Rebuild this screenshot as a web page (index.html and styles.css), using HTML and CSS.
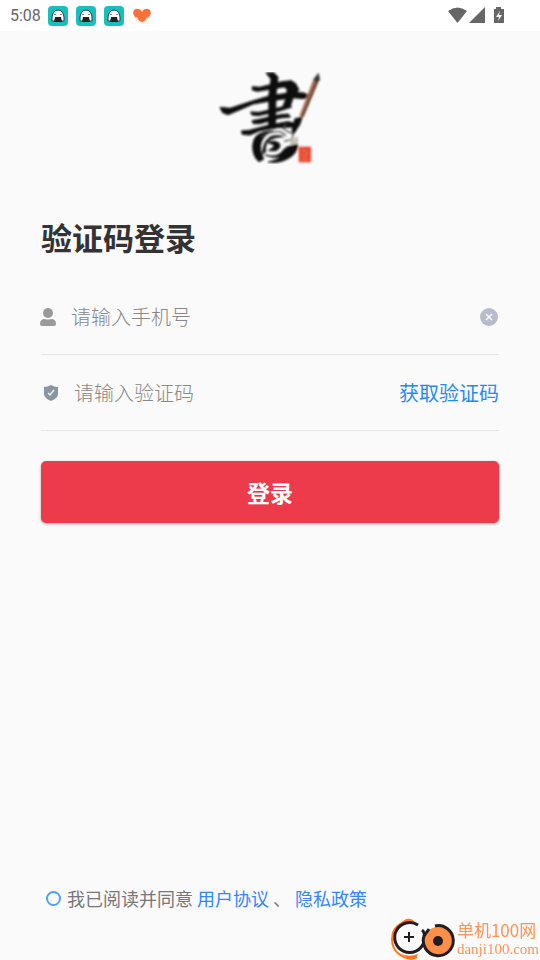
FILE: index.html
```
<!DOCTYPE html>
<html lang="zh-CN">
<head>
    <meta charset="UTF-8">
    <meta name="viewport" content="width=device-width, initial-scale=1.0">
    <link rel="stylesheet" href="styles.css">
    <title>验证码登录</title>
</head>
<body>

<svg width="0" height="0" class="defs">
    <symbol id="ghost" viewBox="0 0 20 20">
        <rect width="20" height="20" rx="4" fill="#17c0bf"/>
        <path d="M4 15V11Q5 4 10 4Q15 4 16 11V15Z" fill="#fff" stroke="#1b4446"/>
        <path d="M6 16L7 11H13L14 16Z" fill="#222"/>
        <path d="M7 8V9M13 8V9" stroke="#222"/>
    </symbol>
</svg>

<header class="status-bar">
    <span class="time">5:08</span>
    <svg class="app-icon"><use href="#ghost"/></svg>
    <svg class="app-icon"><use href="#ghost"/></svg>
    <svg class="app-icon"><use href="#ghost"/></svg>
    <svg class="app-icon" viewBox="0 0 20 20">
        <circle cx="10" cy="10" r="8" fill="#fdf0df"/>
        <path d="M10 6C12 2 17 2 18.500 5C20 9 16 11 14 14C12 15 11 16 10 16C9 16 8 15 6 14C4 11 0 9 1.500 5C3 2 8 2 10 6Z" fill="#f9703f"/>
        <path d="M4.500 11L6 14L8 16M15.500 11L14 14L12 16" stroke="#fdf0df" fill="none"/>
    </svg>
    <svg class="system" viewBox="0 0 58 20" fill="#666">
        <path d="M0 5Q9.500 -2 19 5L9.500 17Z"/>
        <path d="M37 1V17H21Z"/>
        <path d="M48 1H53V3H56V17H46V3H48Z"/>
        <path d="M52 5L48 11H51L50 15L54 9H51Z" fill="#fff"/>
    </svg>
</header>

<main class="page">
    <svg class="logo" viewBox="24 28 312 276" role="img" aria-label="書">
        <defs>
            <filter id="soft" x="-10%" y="-10%" width="120%" height="120%"><feGaussianBlur stdDeviation="3"/></filter>
        </defs>
        <g filter="url(#soft)">
            <g fill="#0b0b0b" stroke="#0b0b0b" stroke-width="3" stroke-linejoin="round">
                <path d="M168 31L191 30L204 43L198 94L196 196L176 198L177 93L183 49Z"/>
                <path d="M127 72L150 74L216 57L244 54L258 65L266 81L251 101L241 130L218 133L228 108L235 77L221 73L142 86L127 82Z"/>
                <path d="M222 62L254 60L266 81L248 103L222 108L232 84Z"/>
                <path d="M30 134L60 137L130 114L181 99L250 89L281 91L301 99L281 108L247 105L181 115L129 124L90 141L54 156L38 150Z"/>
                <path d="M122 148L148 149L237 128L245 133L211 144L145 159L126 157Z"/>
                <path d="M126 174L148 170L210 156L235 154L241 163L210 166L149 183L130 183Z"/>
                <path d="M94 205L118 203L178 187L234 177L260 183L250 193L202 195L150 204L119 217L97 215Z"/>
                <path d="M139 220Q159 204 190 205Q166 213 156 232Q144 258 161 289L147 297Q129 283 128 252Q129 230 139 220Z"/>
                <path d="M174 240Q191 231 208 242Q215 256 197 264L176 264L191 253L192 246Z"/>
                <path d="M165 277Q198 287 216 268Q226 249 263 245Q262 273 235 287Q209 303 175 298Q204 291 212 282Q189 288 165 277Z"/>
                <path d="M255 168L276 164L270 184L251 214L246 203Z"/>
            </g>
            <path d="M156 278Q154 239 182 220Q211 213 224 224Q201 222 181 233Q164 246 169 267Z" fill="#222"/>
            <path d="M228 184L219 197L235 208L249 212L247 230L222 236M153 222Q176 205 211 207L228 219" fill="none" stroke="#444" stroke-width="4"/>
            <path d="M240 234Q247 226 264 222L264 242L240 248Z" fill="#c9c3b8"/>
            <path d="M311 48L326 54L280 164L268 161Z" fill="#a0674a"/>
            <path d="M326 54L280 164L275 163L321 52Z" fill="#4b3028"/>
            <path d="M326 30L330 52L320 60L310 50Z" fill="#303438"/>
            <path d="M266 252H303V299H266Z" fill="#e8492f"/>
            <path d="M275 264H285M290 264V279M274 274L284 280M276 289H294" stroke="#f58265" stroke-width="3"/>
        </g>
    </svg>

    <h1>验证码登录</h1>

    <form class="login-form">
        <div class="field">
            <svg class="field-icon" viewBox="0 0 16 20" fill="#999">
                <ellipse cx="8" cy="6" rx="5" ry="5"/>
                <path d="M0 17Q0 12 5 12Q8 13 11 12Q16 12 16 17Q16 19 14 19H2Q0 19 0 17Z"/>
            </svg>
            <input type="tel" placeholder="请输入手机号" aria-label="手机号">
            <button type="button" class="clear" aria-label="清除">
                <svg viewBox="0 0 18 18">
                    <circle cx="9" cy="9" r="9" fill="#b7bccb"/>
                    <path d="M6 6L12 12M12 6L6 12" stroke="#fafafa" stroke-width="1.500"/>
                </svg>
            </button>
        </div>
        <div class="field code-field">
            <svg class="field-icon" viewBox="0 0 16 18">
                <path d="M8 1Q11 3 15 3V10Q15 14 8 17Q1 14 1 10V3Q5 3 8 1Z" fill="#8995a1"/>
                <path d="M5 9L7 11L11 6" fill="none" stroke="#eef0f2" stroke-width="1.500"/>
            </svg>
            <input type="text" placeholder="请输入验证码" aria-label="验证码">
            <button type="button" class="get-code">获取验证码</button>
        </div>
        <button type="submit" class="login">登录</button>
    </form>

    <div class="agreement">
        <input type="checkbox" id="agree">
        <label for="agree">我已阅读并同意</label>
        <a href="#user">用户协议</a>
        <span>、</span>
        <a href="#privacy">隐私政策</a>
    </div>
</main>

<div class="watermark">
    <svg viewBox="0 0 64 42" fill="none">
        <path d="M23 4Q16 0 11 5Q1 10 1 21Q1 31 8 36Q17 43 26 39" stroke="#ff761d" stroke-width="2"/>
        <path d="M10 6Q15 -2 22 2L22 5Q15 3 10 6ZM9 35Q17 40 27 36Q25 43 18 41Z" fill="#ff761d"/>
        <path d="M27 7A15 15 0 1 0 33 24C34 18 34 14 31 12" stroke="#231c20" stroke-width="3"/>
        <circle cx="47" cy="23" r="14" fill="#ff8f48"/>
        <path d="M44 8A15 15 0 1 1 33 18L38 11" stroke="#231c20" stroke-width="3"/>
        <circle cx="47" cy="23" r="5" fill="#231c20"/>
        <path d="M18 14V24M13 19H23" stroke="#231c20" stroke-width="2"/>
    </svg>
    <div>
        <div class="site-name">单机100网</div>
        <div class="site-url">danji100.com</div>
    </div>
</div>

</body>
</html>
```
FILE: styles.css
```
* {
    box-sizing: border-box;
}

body {
    display: flex;
    flex-direction: column;
    min-height: 100vh;
    margin: 0;
    background-color: #fafafa;
    font-family: "Noto Sans CJK SC", sans-serif;
}

button {
    padding: 0;
    border: 0;
    background: none;
    font-family: inherit;
    cursor: pointer;
}

svg {
    display: block;
    flex-shrink: 0;
}

a {
    color: #3485ff;
    text-decoration: none;
}

.defs {
    position: absolute;
}

.status-bar {
    display: flex;
    align-items: center;
    gap: 8px;
    height: 31px;
    padding: 0 34px 0 10px;
    background-color: #fff;
}

.time {
    width: 30px;
    color: #666;
    font: 400 16px/20px Roboto, sans-serif;
}

.app-icon {
    width: 20px;
    height: 20px;
}

.system {
    width: 58px;
    height: 20px;
    margin-left: auto;
}

.page {
    display: flex;
    flex-direction: column;
    flex: 1;
    padding: 41px 41px 49px;
}

.logo {
    width: 104px;
    height: 92px;
    align-self: center;
}

h1 {
    margin: 50px 0 0;
    color: #333;
    font-size: 31px;
    line-height: 46px;
    font-weight: 700;
}

.login-form {
    margin-top: 19px;
}

.field {
    display: flex;
    align-items: center;
    height: 76px;
    border-bottom: 1px solid #e5e5e5;
}

.field-icon {
    width: 16px;
    height: 20px;
    margin-right: 15px;
    margin-left: -1px;
}

.field input {
    flex: 1;
    min-width: 0;
    padding: 0;
    border: 0;
    outline: 0;
    background: none;
    color: #333;
    font: 300 20px/30px "Noto Sans CJK SC", sans-serif;
}

.field input::placeholder {
    color: #888;
    opacity: 1;
}

.code-field .field-icon {
    margin-left: 2px;
}

.clear svg {
    width: 18px;
    height: 18px;
    margin-right: 1px;
}

.get-code {
    color: #1f8bf5;
    font-size: 20px;
    line-height: 30px;
}

.login {
    width: 100%;
    height: 62px;
    margin-top: 30px;
    border-radius: 5px;
    background-color: #ee3b4b;
    box-shadow: 0 1px 3px rgba(0, 0, 0, 0.3);
    color: #fff;
    font-size: 23px;
    font-weight: 700;
}

.agreement {
    display: flex;
    align-items: center;
    gap: 4px;
    margin-top: auto;
    padding-left: 5px;
    color: #777;
    font-size: 18px;
    line-height: 26px;
}

.agreement input {
    appearance: none;
    width: 15px;
    height: 15px;
    margin: 0 2px 0 0;
    border: 2px solid #4da3f5;
    border-radius: 50%;
}

.agreement input:checked {
    background-color: #4da3f5;
}

.watermark {
    position: fixed;
    right: 1px;
    bottom: 0;
    display: flex;
    gap: 2px;
    color: #ff9355;
}

.watermark svg {
    width: 64px;
    height: 42px;
}

.site-name {
    font-size: 17px;
    line-height: 24px;
}

.site-url {
    font: 15px/15px "Liberation Serif", serif;
}
```
